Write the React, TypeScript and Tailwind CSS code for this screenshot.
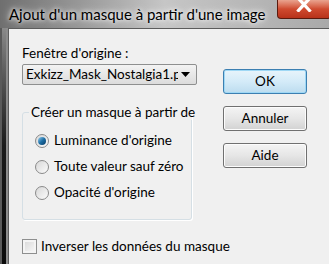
import React from 'react';

const font = { fontFamily: 'Lato, "Noto Sans", sans-serif' };

function Radio({ checked, label }: { checked?: boolean; label: string }) {
  return (
    <div className="flex items-center gap-[5px] h-[26px]">
      <span className="w-[14px] h-[14px] rounded-full border border-[#8a8a8a] bg-gradient-to-br from-[#d8d8d8] to-[#fbfbfb] flex items-center justify-center">
        {checked && (
          <span className="w-[8px] h-[8px] rounded-full bg-gradient-to-br from-[#8fd0f2] via-[#1d6fa5] to-[#0b3c66]" />
        )}
      </span>
      <span className="text-[13.5px] text-black leading-none">{label}</span>
    </div>
  );
}

function Button({ label, primary }: { label: string; primary?: boolean }) {
  return (
    <div
      className={`h-[25px] w-[84px] rounded-[3px] border flex items-center justify-center text-[13.5px] text-black ${
        primary
          ? 'border-[#3c7fb1] bg-gradient-to-b from-[#e8f4fb] via-[#d4ebf8] to-[#bcdcef] shadow-[inset_0_0_0_1px_#9fd8f5]'
          : 'border-[#707070] bg-gradient-to-b from-[#f4f4f4] via-[#e6e6e6] to-[#d2d2d2] shadow-[inset_0_0_0_1px_#fcfcfc]'
      }`}
    >
      {label}
    </div>
  );
}

export default function App() {
  return (
    <div className="w-[329px] h-[264px] overflow-hidden flex flex-col bg-[#9a9a9a]" style={font}>
      {/* Title bar */}
      <div className="h-[28px] flex items-start bg-gradient-to-r from-[#6f6f6f] via-[#c6c6c6] to-[#a9a9a9]">
        <div className="pl-[9px] pt-[4px] text-[15px] text-black leading-[20px] [text-shadow:0_0_8px_#ffffff,0_0_4px_#ffffff] flex-1 whitespace-nowrap">
          Ajout d'un masque à partir d'une image
        </div>
        <div className="w-[54px] h-[19px] mr-[-2px] rounded-b-[4px] border border-t-0 border-[#5a1a0e] bg-gradient-to-b from-[#e9a38f] via-[#cf4a2f] to-[#b8321a] flex justify-center overflow-hidden">
          <svg width="16" height="15" viewBox="0 0 16 15" className="-mt-[3px]">
            <path d="M2.5 1.5 L13.5 13.5 M13.5 1.5 L2.5 13.5" stroke="#ffffff" strokeWidth="3.2" strokeLinecap="square" />
          </svg>
        </div>
      </div>

      <div className="flex flex-1">
        {/* Left frame */}
        <div className="w-[2px] bg-[#5a5a5a]" />
        <div className="w-[4px] bg-gradient-to-b from-[#8a8a8a] via-[#1a1a1a] to-[#0a0a0a]" />
        <div className="w-[2px] bg-[#8c8c8c]" />

        {/* Content */}
        <div className="flex-1 bg-[#f0f0f0] border-t border-l border-[#5c5c5c] flex flex-col pl-[13px]">
          <div className="flex">
            <div className="w-[175px] flex flex-col">
              <div className="mt-[16px] text-[13.5px] leading-[16px] text-black">Fenêtre d'origine :</div>
              <div className="mt-[3px] h-[21px] rounded-[2px] border border-[#8e8f8f] bg-gradient-to-b from-[#f3f3f3] to-[#dcdcdc] flex items-center pl-[3px] pr-[6px]">
                <span className="flex-1 overflow-hidden whitespace-nowrap text-[13.5px] text-black leading-none">
                  Exkizz_Mask_Nostalgia1.pspimage
                </span>
                <svg width="9" height="5" viewBox="0 0 9 5" className="ml-[3px]">
                  <path d="M0 0 H9 L4.5 5 Z" fill="#000000" />
                </svg>
              </div>

              <fieldset className="mt-[19px] w-[170px] min-w-0 border border-[#d5dfe5] rounded-[3px] shadow-[1px_1px_0_#ffffff] pb-[13px]">
                <legend className="ml-[6px] px-[2px] text-[13.5px] leading-[16px] text-black whitespace-nowrap">
                  Créer un masque à partir de
                </legend>
                <div className="mt-[8px] pl-[12px]">
                  <Radio checked label="Luminance d'origine" />
                  <Radio label="Toute valeur sauf zéro" />
                  <Radio label="Opacité d'origine" />
                </div>
              </fieldset>
            </div>
            <div className="ml-[26px] mt-[40px] flex flex-col gap-[12px]">
              <Button label="OK" primary />
              <Button label="Annuler" />
              <Button label="Aide" />
            </div>
          </div>

          <div className="mt-[19px] flex items-center gap-[4px]">
            <span className="w-[15px] h-[15px] border border-[#8e8f8f] bg-gradient-to-br from-[#d6d6d6] to-[#fafafa] shadow-[inset_0_0_0_2px_#f4f4f4]" />
            <span className="text-[13.5px] text-black leading-none">Inverser les données du masque</span>
          </div>
        </div>
      </div>
    </div>
  );
}
